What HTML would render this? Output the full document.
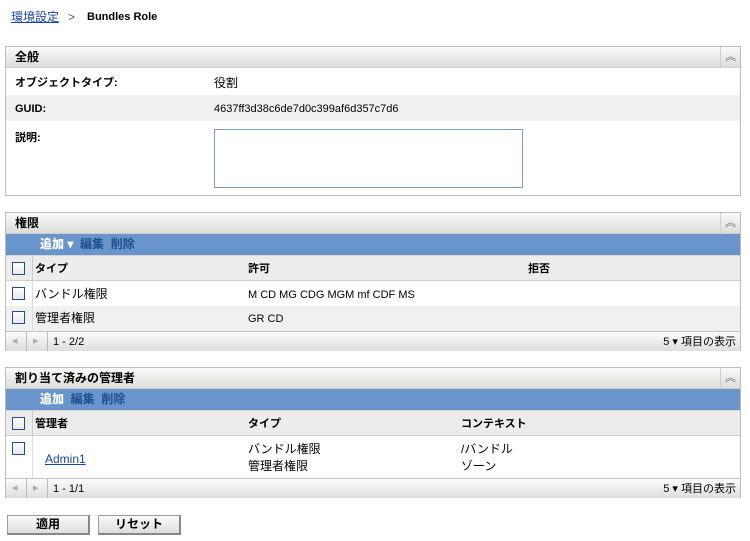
<!DOCTYPE html>
<html><head><meta charset="utf-8"><style>
*{margin:0;padding:0;box-sizing:border-box}
body{width:750px;height:541px;background:#fff;font-family:"Liberation Sans","Noto Sans CJK JP",sans-serif;font-size:12px;line-height:14px;color:#000;position:relative;overflow:hidden}
.a{position:absolute;white-space:nowrap}
.panel{position:absolute;left:5px;width:736px;border:1px solid #bdbdbd;background:#fff}
.hd{position:absolute;left:0;right:0;top:0;height:21px;background:linear-gradient(#fafafa,#dcdcd8);border-bottom:1px solid #d0d0d0;font-weight:bold;padding:3px 0 0 9px}
.col{position:absolute;right:0;top:0;width:20px;height:20px;border-left:1px solid #cfcfcf;color:#666;font-size:11px;text-align:center;line-height:20px}
.tb{position:absolute;left:0;right:0;height:21px;background:#6a95cc;font-weight:bold;padding:3px 0 0 34px;color:#1b4f8f}
.tb b{color:#fff}
.ch{position:absolute;left:0;right:0;background:#ececec;border-top:1px solid #d6d6d6;border-bottom:1px solid #cfcfcf;font-weight:bold;font-size:11px}
.cb{position:absolute;width:13px;height:13px;border:1px solid #1e4f8a;background:linear-gradient(#fff,#e8e8e8)}
.pg{position:absolute;left:0;right:0;height:20px;background:linear-gradient(#fbfbfb,#dedede);border-top:1px solid #c4c4c4;font-size:11px}
.pg .s{position:absolute;top:0;width:1px;height:19px;background:#bbb}
.btn{position:absolute;top:515px;height:20px;width:83px;border:1px solid #999;border-bottom:2px solid #888;border-right:2px solid #888;background:linear-gradient(#fafafa,#ddd);text-align:center;font-weight:bold;line-height:17px}
</style></head><body>
<div class="a" style="left:11px;top:10px;color:#1a45a0;text-decoration:underline">環境設定</div>
<div class="a" style="left:68px;top:10px;color:#555">&gt;</div>
<div class="a" style="left:87px;top:10px;font-weight:bold;font-size:11px">Bundles Role</div>

<div class="panel" style="top:46px;height:150px">
<div class="hd">全般</div><div class="col">︽</div>
<div class="a" style="left:0;right:0;top:22px;height:26px;background:#fff"></div>
<div class="a" style="left:0;right:0;top:48px;height:26px;background:#f0f0f0"></div>
<div class="a" style="left:9px;top:29px;font-weight:bold;font-size:11px">オブジェクトタイプ:</div>
<div class="a" style="left:208px;top:29px">役割</div>
<div class="a" style="left:9px;top:55px;font-weight:bold;font-size:11px">GUID:</div>
<div class="a" style="left:208px;top:55px;font-size:11px">4637ff3d38c6de7d0c399af6d357c7d6</div>
<div class="a" style="left:9px;top:84px;font-weight:bold;font-size:11px">説明:</div>
<div class="a" style="left:208px;top:82px;width:309px;height:59px;border:1px solid #7f9db9"></div>
</div>

<div class="panel" style="top:212px;height:139px">
<div class="hd">権限</div><div class="col">︽</div>
<div class="tb" style="top:21px"><b>追加 ▾</b>&nbsp; 編集 &nbsp;削除</div>
<div class="ch" style="top:42px;height:26px"><div class="cb" style="left:6px;top:6px"></div><div class="a" style="left:26px;top:0;width:1px;height:25px;background:#ccc"></div><span class="a" style="left:29px;top:6px">タイプ</span><span class="a" style="left:242px;top:6px">許可</span><span class="a" style="left:522px;top:6px">拒否</span></div>
<div class="a" style="left:0;right:0;top:93px;height:25px;background:#f0f0f0"></div>
<div class="a" style="left:26px;top:68px;width:1px;height:50px;background:#ddd"></div>
<div class="cb" style="left:6px;top:74px"></div><div class="a" style="left:29px;top:74px">バンドル権限</div><div class="a" style="left:242px;top:75px;font-size:11px">M CD MG CDG MGM mf CDF MS</div>
<div class="cb" style="left:6px;top:98px"></div><div class="a" style="left:29px;top:98px">管理者権限</div><div class="a" style="left:242px;top:99px;font-size:11px">GR CD</div>
<div class="pg" style="top:118px"><span class="a" style="left:6px;top:2px;color:#aaa">◂</span><div class="s" style="left:20px"></div><span class="a" style="left:27px;top:2px;color:#aaa">▸</span><div class="s" style="left:41px"></div><span class="a" style="left:47px;top:3px">1 - 2/2</span><span class="a" style="right:4px;top:3px">5 ▾ 項目の表示</span></div>
</div>

<div class="panel" style="top:367px;height:131px">
<div class="hd">割り当て済みの管理者</div><div class="col">︽</div>
<div class="tb" style="top:21px"><b>追加</b>&nbsp; 編集 &nbsp;削除</div>
<div class="ch" style="top:42px;height:26px"><div class="cb" style="left:6px;top:6px"></div><div class="a" style="left:26px;top:0;width:1px;height:25px;background:#ccc"></div><span class="a" style="left:29px;top:6px">管理者</span><span class="a" style="left:242px;top:6px">タイプ</span><span class="a" style="left:455px;top:6px">コンテキスト</span></div>
<div class="a" style="left:26px;top:68px;width:1px;height:43px;background:#ddd"></div>
<div class="cb" style="left:6px;top:74px"></div>
<div class="a" style="left:39px;top:84px;color:#1a45a0;text-decoration:underline">Admin1</div>
<div class="a" style="left:242px;top:74px">バンドル権限</div><div class="a" style="left:242px;top:91px">管理者権限</div>
<div class="a" style="left:455px;top:74px">/バンドル</div><div class="a" style="left:455px;top:91px">ゾーン</div>
<div class="pg" style="top:110px"><span class="a" style="left:6px;top:2px;color:#aaa">◂</span><div class="s" style="left:20px"></div><span class="a" style="left:27px;top:2px;color:#aaa">▸</span><div class="s" style="left:41px"></div><span class="a" style="left:47px;top:3px">1 - 1/1</span><span class="a" style="right:4px;top:3px">5 ▾ 項目の表示</span></div>
</div>

<div class="btn" style="left:7px">適用</div>
<div class="btn" style="left:98px">リセット</div>
</body></html>
